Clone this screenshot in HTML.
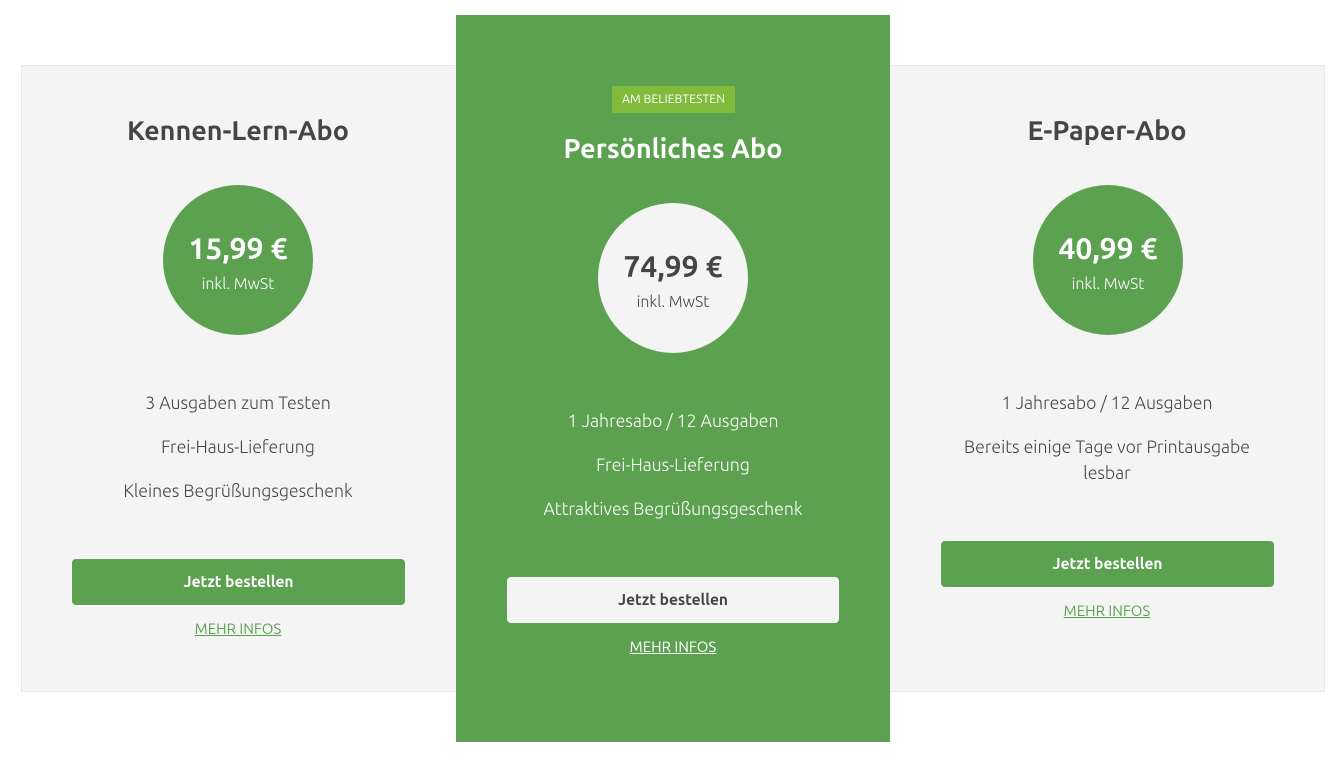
<!DOCTYPE html>
<html><head><meta charset="utf-8"><style>
*{margin:0;padding:0;box-sizing:border-box}
body{width:1338px;height:763px;background:#fff;position:relative;overflow:hidden;font-family:"Ubuntu","DejaVu Sans","Liberation Sans",sans-serif;color:#454545}
.a{position:absolute;text-align:center;white-space:nowrap}
.panel{position:absolute;left:21px;top:65px;width:1304px;height:627px;background:#f4f4f4;border:1px solid #e8e8e8}
.mid{position:absolute;left:456px;top:15px;width:434px;height:727px;background:#5ca150}
.t{font-size:27px;font-weight:bold;line-height:32px}
.c{position:absolute;width:150px;height:150px;border-radius:50%;background:#5ca150;color:#fff;text-align:center}
.c .p{position:absolute;top:46px;width:100%;font-size:30px;font-weight:bold;line-height:34px}
.c .m{position:absolute;top:88px;width:100%;font-size:16px;font-weight:300;line-height:22px}
.f{font-size:17.7px;font-weight:300;line-height:26px}
.b{position:absolute;height:46px;border-radius:4px;background:#5ca150;color:#fff;font-size:15.5px;font-weight:bold;line-height:46px;text-align:center}
.l{font-size:15px;text-decoration:underline;color:#5ca150;line-height:20px}
</style></head><body>
<div class="panel"></div>
<div class="mid"></div>

<div class="a t" style="left:38px;width:400px;top:115px">Kennen-Lern-Abo</div>
<div class="c" style="left:163px;top:185px"><div class="p">15,99 €</div><div class="m">inkl. MwSt</div></div>
<div class="a f" style="left:38px;width:400px;top:391px">3 Ausgaben zum Testen</div>
<div class="a f" style="left:38px;width:400px;top:435px">Frei-Haus-Lieferung</div>
<div class="a f" style="left:38px;width:400px;top:479px">Kleines Begrüßungsgeschenk</div>
<div class="b" style="left:72px;top:559px;width:333px">Jetzt bestellen</div>
<div class="a l" style="left:38px;width:400px;top:619px">MEHR INFOS</div>

<div class="a" style="left:612px;top:86px;width:123px;height:27px;background:#80bb3c;color:#fff;font-size:12.3px;line-height:27px">AM BELIEBTESTEN</div>
<div class="a t" style="left:473px;width:400px;top:133px;color:#fff">Persönliches Abo</div>
<div class="c" style="left:598px;top:203px;background:#f4f4f4;color:#454545"><div class="p">74,99 €</div><div class="m">inkl. MwSt</div></div>
<div class="a f" style="left:473px;width:400px;top:409px;color:#fff">1 Jahresabo / 12 Ausgaben</div>
<div class="a f" style="left:473px;width:400px;top:453px;color:#fff">Frei-Haus-Lieferung</div>
<div class="a f" style="left:473px;width:400px;top:497px;color:#fff">Attraktives Begrüßungsgeschenk</div>
<div class="b" style="left:507px;top:577px;width:332px;background:#f4f4f4;color:#454545">Jetzt bestellen</div>
<div class="a l" style="left:473px;width:400px;top:637px;color:#fff">MEHR INFOS</div>

<div class="a t" style="left:907px;width:400px;top:115px">E-Paper-Abo</div>
<div class="c" style="left:1033px;top:185px"><div class="p">40,99 €</div><div class="m">inkl. MwSt</div></div>
<div class="a f" style="left:907px;width:400px;top:391px">1 Jahresabo / 12 Ausgaben</div>
<div class="a f" style="left:907px;width:400px;top:435px">Bereits einige Tage vor Printausgabe<br>lesbar</div>
<div class="b" style="left:941px;top:541px;width:333px">Jetzt bestellen</div>
<div class="a l" style="left:907px;width:400px;top:601px">MEHR INFOS</div>
</body></html>
